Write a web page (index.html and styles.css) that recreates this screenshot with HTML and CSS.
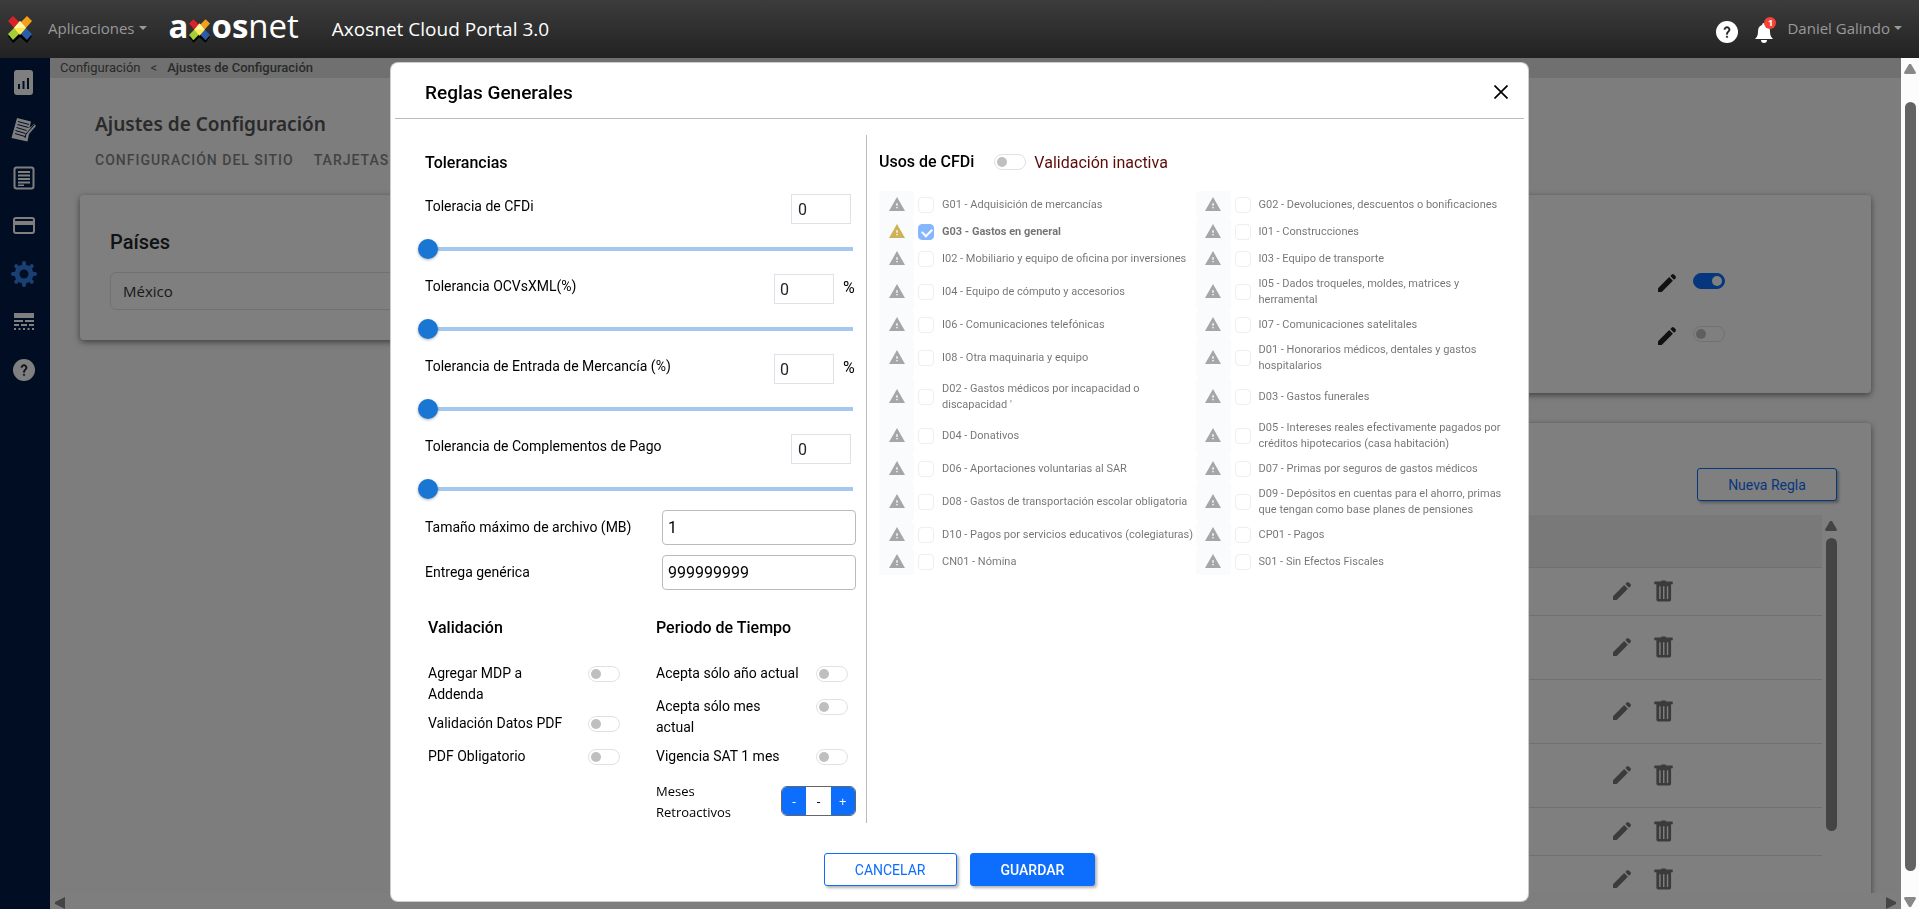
FILE: index.html
```html
<!DOCTYPE html>
<html lang="es">

<head>
    <meta charset="utf-8">
    <meta name="viewport" content="width=device-width, initial-scale=1.0">
    <title>Axosnet Cloud Portal 3.0</title>
    <link rel="stylesheet" href="styles.css">
</head>

<body>
    <svg class="sprite" aria-hidden="true">
        <symbol id="i-x" viewBox="0 0 24 28">
            <path fill="#000" d="M0 21l5 7 7-6 7 6 5-7-12-6z" />
            <path fill="#d8232a" d="M0 6l5-5 7 7-5 6z" />
            <path fill="#f6a01a" d="M24 6l-5-5-7 7 5 6z" />
            <path fill="#a5cd39" d="M0 19l7-7 5 6-7 7z" />
            <path fill="#2a5caa" d="M24 19l-7-7-5 6 7 7z" />
            <path fill="#ffe94e" d="M12 6l6 7-6 7-6-7z" />
            <path fill="#fff6a6" d="M12 6l6 7H6z" />
        </symbol>
        <symbol id="i-help" viewBox="0 0 22 22">
            <circle cx="11" cy="11" r="11" />
            <path class="help-mark" transform="translate(1.400 1.400) scale(.8)" d="M13 19h-2v-2h2v2zm2.070-7.750l-.9.920C13.450 12.900 13 13.500 13 15h-2v-.5c0-1.100.450-2.100 1.170-2.830l1.240-1.260c.370-.360.590-.860.590-1.410 0-1.100-.9-2-2-2s-2 .9-2 2H8c0-2.210 1.790-4 4-4s4 1.790 4 4c0 .880-.360 1.680-.930 2.250z" />
        </symbol>
        <symbol id="i-pencil" viewBox="0 0 24 24">
            <path d="M3.500 21a.5.500 0 0 1-.5-.5V17.300L14.200 6.100l3.700 3.700L6.700 21z" />
            <path d="M15.300 5l1.500-1.500a1.500 1.500 0 0 1 2.100 0l1.600 1.600a1.500 1.500 0 0 1 0 2.100L19 8.700z" />
        </symbol>
        <symbol id="i-trash" viewBox="0 0 20 22">
            <path fill-rule="evenodd" d="M1 1h6l1-1h4l1 1h6a.8.8 0 0 1 .8.800V3a1 1 0 0 1-.8 1H18v16a2 2 0 0 1-2 2H4.500a2 2 0 0 1-2-2V4H1a1 1 0 0 1-.8-1V1.800A.8.800 0 0 1 1 1zm4.500 5v13.500H7V6zm4 0v13.500H11V6zm4 0v13.500H15V6z" />
        </symbol>
        <symbol id="i-warn" viewBox="1 2 22 19">
            <path d="M1 21h22L12 2 1 21zm12-3.500h-2v-2h2v2zm0-3.500h-2v-3.500h2V14z" />
        </symbol>
    </svg>

    <header class="topbar">
        <svg class="mark">
            <use href="#i-x" />
        </svg>
        <a class="top-link apps" href="#">Aplicaciones</a>
        <div class="logo"><b>a</b><svg>
                <use href="#i-x" />
            </svg><b>os</b>net</div>
        <h1>Axosnet Cloud Portal 3.0</h1>
        <div class="top-right">
            <button class="icon-btn" aria-label="Ayuda"><svg class="top-help">
                    <use href="#i-help" />
                </svg></button>
            <button class="icon-btn bell" aria-label="Notificaciones">
                <svg viewBox="0 0 20 20">
                    <path d="M10 0a2 2 0 0 1 2 2c3 1 4 3.500 4 6.500 0 4 1 5.500 3 7.500H1c2-2 3-3.500 3-7.500C4 5.500 5 3 8 2a2 2 0 0 1 2-2zM7 17h6a3 3 0 0 1-6 0z" />
                </svg>
                <span class="badge">1</span>
            </button>
            <a class="top-link" href="#">Daniel Galindo</a>
        </div>
    </header>

    <div class="shell">
        <nav class="sidebar">
            <a href="#" aria-label="Reportes"><svg width="19" height="25" viewBox="0 0 19 25">
                    <rect width="19" height="25" rx="3" />
                    <path class="cut" d="M4 14h2v5H4zM8.500 11h2v8h-2zM13 8h2v11h-2z" />
                </svg></a>
            <a href="#" aria-label="Facturas"><svg width="25" height="24" viewBox="0 0 25 24">
                    <path d="M6 0l14 3.500-1.500 6.500L21 8l2-2 2 2-7 8-1.500 7.500L.5 20z" />
                    <path class="line" d="M7 3.500l11 3M6.500 6.500l11 3M5.500 9.500l10 3M4.500 12.500l10 3M4 15.500l10 3" />
                    <path class="line" d="M23 7l-8 9-1 4" />
                </svg></a>
            <a href="#" aria-label="Documentos"><svg width="22" height="24" viewBox="0 0 22 24">
                    <rect class="out" x="1.500" y="1.500" width="19" height="21" rx="2" />
                    <path d="M5 5h12v2H5zM5 8.500h12v2H5zM5 12h12v2H5zM5 15.500h12v2H5zM5 18.500h6v1.500H5z" />
                </svg></a>
            <a href="#" aria-label="Pagos"><svg width="22" height="18" viewBox="0 0 22 18">
                    <rect class="out" x="1" y="1" width="20" height="15" rx="2" />
                    <path d="M1 4h20v4H1z" />
                </svg></a>
            <a href="#" class="active" aria-label="Configuración"><svg width="26" height="26" viewBox="0 0 26 26">
                    <circle cx="13" cy="13" r="7" class="ring" />
                    <path class="teeth" d="M13 2v3M13 21v3M2 13h3M21 13h3M5.200 5.200l2 2M18.800 18.800l2 2M5.200 20.800l2-2M18.800 7.200l2-2" />
                </svg></a>
            <a href="#" aria-label="Reglas"><svg width="20" height="18" viewBox="0 0 20 18">
                    <path d="M0 0h20v5H0zM0 7h9v2H0zM11 7h9v2h-9zM0 11h5v2H0zM7 11h6v2H7zM15 11h5v2h-5zM0 15h2v2H0zM4.500 15h2v2h-2zM9 15h2v2H9zM13.500 15h2v2h-2zM18 15h2v2h-2z" />
                </svg></a>
            <a href="#" aria-label="Ayuda"><svg width="22" height="22">
                    <use href="#i-help" />
                </svg></a>
        </nav>

        <main class="main">
            <div class="breadcrumb"><a href="#">Configuración</a><span>&lt;</span><b>Ajustes de Configuración</b></div>
            <div class="page">
                <h2>Ajustes de Configuración</h2>
                <div class="tabs"><a href="#">Configuración del sitio</a><a href="#">Tarjetas</a></div>
                <div class="cards">
                    <section class="card countries">
                        <h3>Países</h3>
                        <select aria-label="Países">
                            <option>México</option>
                        </select>
                    </section>
                    <div class="col">
                        <section class="card switches">
                            <div class="switch-row">
                                <button class="icon-btn" aria-label="Editar"><svg class="pencil">
                                        <use href="#i-pencil" />
                                    </svg></button>
                                <input type="checkbox" class="switch" aria-label="Activar" checked>
                            </div>
                            <div class="switch-row">
                                <button class="icon-btn" aria-label="Editar"><svg class="pencil">
                                        <use href="#i-pencil" />
                                    </svg></button>
                                <input type="checkbox" class="switch" aria-label="Activar">
                            </div>
                        </section>
                        <section class="card rules">
                            <button class="btn btn-outline nueva">Nueva Regla</button>
                            <div class="rules-scroll">
                                <table>
                                    <thead>
                                        <tr>
                                            <th></th>
                                            <th></th>
                                        </tr>
                                    </thead>
                                    <tbody id="reglas"></tbody>
                                </table>
                                <div class="vbar"><i class="up"></i><i class="thumb"></i></div>
                            </div>
                        </section>
                    </div>
                </div>
            </div>
            <div class="hbar"><i class="back"></i><i></i></div>
        </main>

        <div class="vbar page-bar"><i class="up"></i><i class="thumb"></i><i class="down"></i></div>
    </div>

    <div class="backdrop"></div>

    <div class="modal-wrap">
        <div class="modal" role="dialog" aria-labelledby="modal-title">
            <div class="modal-header">
                <h2 id="modal-title">Reglas Generales</h2>
                <button class="icon-btn" aria-label="Cerrar"><svg width="14" height="14" viewBox="0 0 14 14">
                        <path d="M.5.500l13 13M13.500.500l-13 13" stroke="#000" stroke-width="1.700" />
                    </svg></button>
            </div>

            <div class="modal-body">
                <section class="tolerancias">
                    <h3>Tolerancias</h3>
                    <div class="tol">
                        <div class="tol-head">
                            <label for="t1">Toleracia de CFDi</label>
                            <input id="t1" type="text" value="0">
                        </div>
                        <input type="range" value="0" aria-label="Toleracia de CFDi">
                    </div>
                    <div class="tol">
                        <div class="tol-head pct">
                            <label for="t2">Tolerancia OCVsXML(%)</label>
                            <input id="t2" type="text" value="0"><span>%</span>
                        </div>
                        <input type="range" value="0" aria-label="Tolerancia OCVsXML">
                    </div>
                    <div class="tol">
                        <div class="tol-head pct">
                            <label for="t3">Tolerancia de Entrada de Mercancía (%)</label>
                            <input id="t3" type="text" value="0"><span>%</span>
                        </div>
                        <input type="range" value="0" aria-label="Tolerancia de Entrada de Mercancía">
                    </div>
                    <div class="tol">
                        <div class="tol-head">
                            <label for="t4">Tolerancia de Complementos de Pago</label>
                            <input id="t4" type="text" value="0">
                        </div>
                        <input type="range" value="0" aria-label="Tolerancia de Complementos de Pago">
                    </div>

                    <div class="fields">
                        <label for="tam">Tamaño máximo de archivo (MB)</label>
                        <input id="tam" type="text" value="1">
                        <label for="entrega">Entrega genérica</label>
                        <input id="entrega" type="text" value="999999999">
                    </div>

                    <div class="options">
                        <div>
                            <h3>Validación</h3>
                            <label class="opt"><span>Agregar MDP a Addenda</span><input type="checkbox" class="switch"></label>
                            <label class="opt"><span>Validación Datos PDF</span><input type="checkbox" class="switch"></label>
                            <label class="opt"><span>PDF Obligatorio</span><input type="checkbox" class="switch"></label>
                        </div>
                        <div>
                            <h3>Periodo de Tiempo</h3>
                            <label class="opt"><span>Acepta sólo año actual</span><input type="checkbox" class="switch"></label>
                            <label class="opt"><span>Acepta sólo mes actual</span><input type="checkbox" class="switch"></label>
                            <label class="opt"><span>Vigencia SAT 1 mes</span><input type="checkbox" class="switch"></label>
                            <div class="months">
                                <span>Meses Retroactivos</span>
                                <div class="stepper"><button>-</button><output>-</output><button>+</button></div>
                            </div>
                        </div>
                    </div>
                </section>

                <section class="cfdi">
                    <div class="usos-head">
                        <h3>Usos de CFDi</h3>
                        <input id="validar" type="checkbox" class="switch">
                        <label for="validar">Validación inactiva</label>
                    </div>
                    <div class="usos" id="usos"></div>
                </section>
            </div>

            <div class="modal-footer">
                <button class="btn btn-outline">CANCELAR</button>
                <button class="btn btn-primary">GUARDAR</button>
            </div>
        </div>
    </div>

    <template id="uso">
        <div class="uso">
            <span class="warn"><svg>
                    <use href="#i-warn" />
                </svg></span>
            <input type="checkbox" disabled>
            <label></label>
        </div>
    </template>

    <template id="regla">
        <tr>
            <td></td>
            <td>
                <div class="actions">
                    <button class="icon-btn" aria-label="Editar"><svg class="pencil">
                            <use href="#i-pencil" />
                        </svg></button>
                    <button class="icon-btn" aria-label="Eliminar"><svg class="trash">
                            <use href="#i-trash" />
                        </svg></button>
                </div>
            </td>
        </tr>
    </template>

    <script>
        const usos = [
            "G01 - Adquisición de mercancías", "G02 - Devoluciones, descuentos o bonificaciones",
            "G03 - Gastos en general", "I01 - Construcciones",
            "I02 - Mobiliario y equipo de oficina por inversiones", "I03 - Equipo de transporte",
            "I04 - Equipo de cómputo y accesorios", "I05 - Dados troqueles, moldes, matrices y herramental",
            "I06 - Comunicaciones telefónicas", "I07 - Comunicaciones satelitales",
            "I08 - Otra maquinaria y equipo", "D01 - Honorarios médicos, dentales y gastos hospitalarios",
            "D02 - Gastos médicos por incapacidad o discapacidad '", "D03 - Gastos funerales",
            "D04 - Donativos", "D05 - Intereses reales efectivamente pagados por créditos hipotecarios (casa habitación)",
            "D06 - Aportaciones voluntarias al SAR", "D07 - Primas por seguros de gastos médicos",
            "D08 - Gastos de transportación escolar obligatoria", "D09 - Depósitos en cuentas para el ahorro, primas que tengan como base planes de pensiones",
            "D10 - Pagos por servicios educativos (colegiaturas)", "CP01 - Pagos",
            "CN01 - Nómina", "S01 - Sin Efectos Fiscales"
        ];
        const altas = [false, true, true, true, false, false];

        const usoTemplate = document.querySelector("#uso");
        usos.forEach((texto, i) => {
            const klon = usoTemplate.content.cloneNode(true);
            const input = klon.querySelector("input");
            const label = klon.querySelector("label");
            input.id = "uso-" + i;
            label.htmlFor = input.id;
            label.textContent = texto;
            if (texto.startsWith("G03")) {
                input.checked = true;
                klon.querySelector(".uso").classList.add("activo");
            }
            document.querySelector("#usos").appendChild(klon);
        });

        const reglaTemplate = document.querySelector("#regla");
        altas.forEach(alta => {
            const klon = reglaTemplate.content.cloneNode(true);
            if (alta) klon.querySelector("tr").classList.add("alta");
            document.querySelector("#reglas").appendChild(klon);
        });
    </script>
</body>

</html>
```
FILE: styles.css
```css
* {
    box-sizing: border-box;
}

body {
    margin: 0;
    height: 100vh;
    display: flex;
    flex-direction: column;
    overflow: hidden;
    font-family: Roboto, sans-serif;
    font-size: 14px;
    line-height: 21px;
    color: #000;
}

h1,
h2,
h3 {
    margin: 0;
}

a {
    color: inherit;
    text-decoration: none;
}

button,
input,
select {
    font-family: inherit;
    margin: 0;
}

svg {
    display: block;
}

.sprite {
    display: none;
}

.help-mark {
    fill: #1b1f2a;
    stroke: #1b1f2a;
    stroke-width: .4;
}

.icon-btn {
    border: 0;
    padding: 0;
    background: none;
    cursor: pointer;
}

/* top bar */
.topbar {
    height: 58px;
    flex: none;
    display: flex;
    align-items: center;
    background: linear-gradient(#3c3c3c, #222);
    font-family: "Open Sans", sans-serif;
    color: #fff;
}

.mark {
    width: 24px;
    height: 28px;
    margin-left: 8px;
}

.top-link {
    color: #999;
    font-size: 15px;
    display: flex;
    align-items: center;
    padding-bottom: 2px;
}

.top-link::after {
    content: "";
    margin-left: 4px;
    border: 4px solid transparent;
    border-top-color: #999;
    border-bottom: 0;
}

.apps {
    margin-left: 16px;
}

.logo {
    display: flex;
    align-items: center;
    margin-left: 22px;
    font-size: 33px;
    line-height: 32px;
    padding-bottom: 6px;
}

.logo svg {
    width: 21px;
    height: 25px;
    margin: 8px 1px 0;
}

.topbar h1 {
    font-size: 19px;
    font-weight: 400;
    margin-left: 33px;
}

.top-right {
    margin-left: auto;
    margin-right: 17px;
    display: flex;
    align-items: center;
}

.top-right svg {
    fill: #fff;
}

.top-help {
    width: 22px;
    height: 22px;
    margin-top: 6px;
}

.bell {
    position: relative;
    margin: 8px 13px 0 16px;
}

.bell svg {
    width: 20px;
    height: 20px;
}

.badge {
    position: absolute;
    top: -6px;
    right: -2px;
    width: 12px;
    height: 12px;
    border-radius: 50%;
    background: #f44336;
    color: #fff;
    font-size: 9px;
    font-weight: 700;
    line-height: 12px;
}

/* page behind the dialog */
.shell {
    flex: 1;
    min-height: 0;
    display: flex;
}

.sidebar {
    width: 50px;
    background: #001a44;
    display: flex;
    flex-direction: column;
}

.sidebar a {
    width: 47px;
    height: 48px;
    display: flex;
    align-items: center;
    justify-content: center;
    fill: #fff;
}

.sidebar .cut {
    fill: #001a44;
}

.sidebar .line {
    fill: none;
    stroke: #001a44;
}

.sidebar .out {
    fill: none;
    stroke: #fff;
    stroke-width: 2;
}

.sidebar .ring,
.sidebar .teeth {
    fill: none;
    stroke: #347ee6;
    stroke-width: 5;
}

.sidebar .teeth {
    stroke-linecap: round;
    stroke-width: 4;
}

.main {
    flex: 1;
    min-width: 0;
    display: flex;
    flex-direction: column;
    background: #fafafa;
}

.breadcrumb {
    flex: none;
    height: 20px;
    padding-left: 10px;
    background: #e0e0e0;
    color: #555;
    font-size: 13px;
    line-height: 20px;
}

.breadcrumb span {
    margin: 0 10px;
}

.breadcrumb b {
    font-weight: 500;
}

.page {
    flex: 1;
    min-height: 0;
    overflow: hidden;
    padding: 34px 30px 0;
}

.page h2 {
    margin-left: 15px;
    font: 600 19px/24px "Noto Sans", sans-serif;
    color: #555;
}

.tabs {
    margin: 14px 0 24px 15px;
    display: flex;
    gap: 20px;
    font-weight: 500;
    letter-spacing: 1px;
    text-transform: uppercase;
    color: #858585;
}

.cards {
    display: flex;
    align-items: flex-start;
    gap: 30px;
}

.card {
    background: #fff;
    border-radius: 4px;
    box-shadow: 0 2px 6px rgba(0, 0, 0, .5);
}

.countries {
    width: 32%;
    height: 145px;
    padding: 35px 30px 0;
}

.countries h3 {
    font-size: 20px;
    font-weight: 500;
    line-height: 24px;
    color: #212529;
}

.countries select {
    appearance: none;
    width: 100%;
    height: 38px;
    margin-top: 18px;
    padding: 0 12px;
    border: 1px solid #dee2e6;
    border-radius: 6px;
    background: #fff;
    color: #333;
    font: 15px "Open Sans", sans-serif;
}

.col {
    flex: 1;
    display: flex;
    flex-direction: column;
    gap: 30px;
}

.switches {
    height: 198px;
    padding: 61px 146px 0 0;
}

.switch-row {
    height: 53px;
    display: flex;
    justify-content: flex-end;
    align-items: center;
    gap: 14px;
}

.switch-row .switch {
    margin-bottom: 3px;
}

.pencil {
    width: 24px;
    height: 24px;
    fill: #222;
}

.rules {
    padding: 45px 34px 0;
    display: flex;
    flex-direction: column;
}

.nueva {
    align-self: flex-end;
    width: 140px;
    margin-bottom: 14px;
}

.rules-scroll {
    display: flex;
    height: 440px;
}

.rules table {
    flex: 1;
    align-self: flex-start;
    border-collapse: collapse;
}

.rules tr {
    height: 48px;
    border-bottom: 1px solid #e0e0e0;
}

.rules thead tr {
    height: 52px;
    background: #f2f2f2;
}

.rules .alta {
    height: 64px;
}

.rules td {
    padding: 0;
}

.rules .pencil,
.rules .trash {
    fill: #777;
}

.rules .trash {
    width: 19px;
    height: 22px;
}

.actions {
    display: flex;
    justify-content: flex-end;
    align-items: center;
    gap: 20px;
    padding-right: 149px;
}

/* scroll bars */
.vbar {
    width: 18px;
    display: flex;
    flex-direction: column;
    align-items: center;
    padding: 6px 0 2px;
}

.vbar .thumb {
    width: 11px;
    border-radius: 6px;
    background: #888;
    margin-top: 7px;
    height: 293px;
}

.vbar .up,
.vbar .down {
    width: 12px;
    height: 10px;
    background: #888;
    clip-path: polygon(42% 0, 58% 0, 100% 86%, 94% 100%, 6% 100%, 0 86%);
}

.vbar .down {
    transform: rotate(180deg);
    margin-top: auto;
}

.rules .vbar {
    margin-right: -3px;
}

.page-bar {
    background: #fcfcfc;
}

.page-bar .thumb {
    background: #636363;
    margin: 28px 0 26px;
    flex: 1;
}

.hbar {
    flex: none;
    height: 16px;
    padding: 4px 5px 0;
    display: flex;
    justify-content: space-between;
    align-items: center;
    background: #fcfcfc;
}

.hbar i {
    width: 10px;
    height: 12px;
    background: #888;
    clip-path: polygon(0 0, 100% 42%, 100% 58%, 0 100%);
}

.hbar .back {
    transform: rotate(180deg);
}

/* dialog */
.backdrop {
    position: fixed;
    inset: 58px 18px 0 0;
    background: rgba(0, 0, 0, .5);
}

.modal-wrap {
    position: fixed;
    inset: 62px 0 0;
    display: flex;
    justify-content: center;
    align-items: flex-start;
}

.modal {
    width: 100%;
    max-width: 1139px;
    background: #fff;
    border: 1px solid rgba(0, 0, 0, .2);
    border-radius: 8px;
}

.modal-header {
    height: 56px;
    margin: 0 4px;
    padding: 3px 16px 0 30px;
    display: flex;
    align-items: center;
    justify-content: space-between;
    border-bottom: 1px solid #bbb;
}

.modal-header h2 {
    font-size: 19px;
    font-weight: 500;
}

.modal h3 {
    font-size: 16px;
    font-weight: 500;
    line-height: 24px;
}

.modal-body {
    display: grid;
    grid-template-columns: minmax(0, 476px) 1fr;
    padding-top: 16px;
}

.tolerancias {
    padding: 16px 10px 0 34px;
    border-right: 1px solid #bbb;
}

.tolerancias h3 + .tol {
    margin-top: 9px;
}

.tol {
    padding: 10px 0 5px;
}

.tol-head {
    display: flex;
    align-items: flex-start;
    padding-right: 5px;
}

.tol-head label {
    flex: 1;
    line-height: 24px;
}

.tol-head input {
    width: 60px;
    height: 30px;
    padding: 0 6px;
    border: 1px solid #dee2e6;
    font-size: 16px;
    color: #212529;
}

.tol-head.pct {
    padding-right: 0;
}

.tol-head.pct input {
    padding: 0 5px;
}

.pct span {
    width: 22px;
    padding-left: 9px;
    font-size: 16px;
    line-height: 28px;
}

.tol input[type="range"] {
    appearance: none;
    display: block;
    width: 437px;
    height: 20px;
    margin: 15px 0 0 -7px;
    background: linear-gradient(#a5c9ee, #a5c9ee) center / calc(100% - 4px) 4px no-repeat;
}

.tol input[type="range"]::-webkit-slider-thumb {
    appearance: none;
    width: 20px;
    height: 20px;
    border-radius: 50%;
    background: #1976d2;
    box-shadow: 0 1px 3px rgba(0, 0, 0, .3);
}

.fields {
    display: grid;
    grid-template-columns: 1fr 194px;
    gap: 10px 0;
    align-items: center;
    margin-top: 6px;
}

.fields input {
    height: 35px;
    padding: 0 5px;
    border: 1px solid #bbb;
    border-radius: 4px;
    font-size: 16px;
    color: #000;
}

.options {
    display: grid;
    grid-template-columns: 228px 1fr;
    margin-top: 26px;
    padding-left: 3px;
}

.options h3 {
    margin-bottom: 23px;
}

.opt {
    display: grid;
    grid-template-columns: 145px 32px;
    gap: 15px;
    align-items: start;
    min-height: 25px;
    margin-bottom: 8px;
}

.opt .switch {
    margin-top: 3px;
}

.switch {
    appearance: none;
    width: 32px;
    height: 16px;
    padding: 2px;
    border: 1px solid #dee2e6;
    border-radius: 8px;
    background: #fff;
}

.switch::before {
    content: "";
    display: block;
    width: 10px;
    height: 10px;
    border-radius: 50%;
    background: #bfbfbf;
}

.switch:checked {
    background: #0d6efd;
    border-color: #0d6efd;
}

.switch:checked::before {
    margin-left: 16px;
    background: #fff;
}

.months {
    display: flex;
    align-items: flex-start;
    justify-content: space-between;
    margin-top: 10px;
    font-family: "Open Sans", sans-serif;
    font-size: 13px;
}

.months > span {
    width: 100px;
}

.stepper {
    display: flex;
    width: 75px;
    height: 30px;
    margin-top: 5px;
    border: 1px solid #666;
    border-radius: 6px;
    overflow: hidden;
}

.stepper button,
.stepper output {
    flex: 1;
    padding: 0;
    border: 0;
    text-align: center;
    font-size: 13px;
    line-height: 28px;
}

.stepper button {
    background: #0d6efd;
    color: #fff;
}

.cfdi {
    padding: 15px 16px 0 12px;
}

.usos-head {
    display: flex;
    align-items: center;
}

.usos-head .switch {
    margin: 0 8px 0 20px;
}

.usos-head label {
    font-size: 16px;
    color: #5c0a0a;
}

.usos {
    display: grid;
    grid-template-columns: 1fr 1fr;
    margin-top: 17px;
    font-size: 11px;
    line-height: 16px;
}

.uso {
    display: flex;
    align-items: center;
    min-height: 27px;
}

.uso label {
    flex: 1;
    margin-left: 8px;
    padding: 4px 0 3px;
    opacity: .55;
}

.warn {
    width: 35px;
    align-self: stretch;
    display: flex;
    align-items: center;
    justify-content: center;
    background: #fafbfd;
    border-radius: 4px;
}

.warn svg {
    width: 16px;
    height: 14px;
    margin-bottom: 1px;
    fill: #a6a6a6;
}

.uso input {
    appearance: none;
    width: 16px;
    height: 16px;
    margin-left: 4px;
    border: 1px solid #eee;
    border-radius: 4px;
    background: #fff;
}

.uso input:checked {
    background: #86b7fe;
    border-color: #86b7fe;
}

.uso input:checked::before {
    content: "";
    display: block;
    width: 8px;
    height: 5px;
    margin: 3px;
    border: solid #fff;
    border-width: 0 0 2px 2px;
    transform: rotate(-45deg);
}

.activo label {
    font-weight: 700;
}

.activo .warn svg {
    fill: #cdb257;
}

.modal-footer {
    display: flex;
    justify-content: center;
    gap: 13px;
    padding: 30px 0 15px;
}

.btn {
    height: 33px;
    padding: 0 30px;
    border: 1px solid #0d6efd;
    border-radius: 3px;
    font-size: 14px;
    box-shadow: 2px 2px 3px rgba(0, 0, 0, .3);
}

.btn-outline {
    background: #fff;
    color: #0d6efd;
}

.btn-primary {
    background: #0d6efd;
    color: #fff;
    font-weight: 500;
}
```
